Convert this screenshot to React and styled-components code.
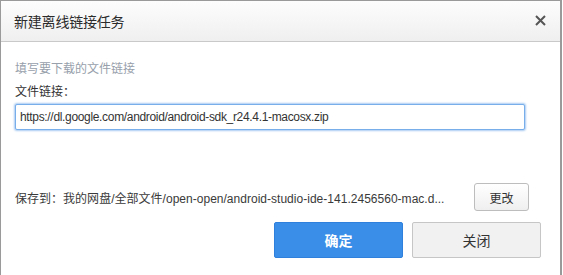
import React, { useState } from "react";
import styled, { createGlobalStyle } from "styled-components";

const GlobalStyle = createGlobalStyle`
  html, body {
    margin: 0;
    padding: 0;
    background: #ffffff;
    overflow: hidden;
  }
  body {
    font-family: "Liberation Sans", "Noto Sans CJK SC", sans-serif;
    color: #333;
  }
`;

const Dialog = styled.div`
  width: 559px;
  height: 274px;
  border-style: solid;
  border-color: #9a9a9a;
  border-width: 1px 2px 0 1px;
  background: #fff;
`;

const Header = styled.div`
  height: 40px;
  display: flex;
  align-items: center;
  justify-content: space-between;
  padding: 0 14px 0 13px;
  background: linear-gradient(#fdfdfd, #efefef);
  border-bottom: 1px solid #c9c9c9;
`;

const Title = styled.h1`
  margin: 0;
  font-size: 14px;
  font-weight: normal;
  color: #2b2b2b;
  letter-spacing: -0.2px;
`;

const CloseButton = styled.button`
  display: flex;
  padding: 0;
  border: 0;
  background: none;
  cursor: pointer;
  margin-top: -1px;
`;

const Body = styled.div`
  padding: 19px 0 0 14px;
`;

const Hint = styled.p`
  margin: 0;
  font-size: 12px;
  line-height: 16px;
  color: #97a0ab;
`;

const Label = styled.label`
  display: block;
  margin-top: 7px;
  font-size: 12px;
  line-height: 16px;
  color: #333;
`;

const LinkInput = styled.input`
  display: block;
  box-sizing: border-box;
  width: 510px;
  height: 26px;
  margin-top: 4px;
  padding: 0 4px;
  border: 1px solid #78aeea;
  border-radius: 2px;
  box-shadow: 0 0 2px 1px #a9cbf2;
  outline: none;
  font-family: inherit;
  font-size: 12px;
  letter-spacing: -0.33px;
  color: #333;
`;

const SaveRow = styled.div`
  display: flex;
  align-items: center;
  justify-content: space-between;
  width: 514px;
  margin-top: 53px;
`;

const SavePath = styled.span`
  font-size: 12px;
  color: #3a3a3a;
  letter-spacing: 0.02px;
`;

const SmallButton = styled.button`
  width: 55px;
  height: 28px;
  padding: 0;
  border: 1px solid #bdbdbd;
  border-radius: 3px;
  background: linear-gradient(#ffffff, #efefef);
  font-family: inherit;
  font-size: 12px;
  color: #333;
  cursor: pointer;
`;

const Footer = styled.div`
  display: flex;
  justify-content: flex-end;
  gap: 9px;
  margin-top: 11px;
  padding-right: 19px;
`;

const ActionButton = styled.button`
  width: 129px;
  height: 36px;
  padding: 0;
  border-radius: 2px;
  border: 1px solid ${({ $primary }) => ($primary ? "#2f80dc" : "#c6c6c6")};
  background: ${({ $primary }) => ($primary ? "#3a8ee8" : "#f1f1f1")};
  color: ${({ $primary }) => ($primary ? "#fff" : "#333")};
  font-family: inherit;
  font-size: 14px;
  font-weight: ${({ $primary }) => ($primary ? "bold" : "normal")};
  cursor: pointer;
`;

function CloseIcon() {
  return (
    <svg width="11" height="11" viewBox="0 0 11 11">
      <path d="M1 1L10 10M10 1L1 10" stroke="#555" strokeWidth="2" />
    </svg>
  );
}

export default function App() {
  const [link, setLink] = useState(
    "https://dl.google.com/android/android-sdk_r24.4.1-macosx.zip"
  );

  return (
    <>
      <GlobalStyle />
      <Dialog>
        <Header>
          <Title>新建离线链接任务</Title>
          <CloseButton aria-label="关闭">
            <CloseIcon />
          </CloseButton>
        </Header>
        <Body>
          <Hint>填写要下载的文件链接</Hint>
          <Label htmlFor="link">文件链接：</Label>
          <LinkInput
            id="link"
            value={link}
            onChange={(e) => setLink(e.target.value)}
          />
          <SaveRow>
            <SavePath>
              保存到：我的网盘/全部文件/open-open/android-studio-ide-141.2456560-mac.d...
            </SavePath>
            <SmallButton>更改</SmallButton>
          </SaveRow>
          <Footer>
            <ActionButton $primary>确定</ActionButton>
            <ActionButton>关闭</ActionButton>
          </Footer>
        </Body>
      </Dialog>
    </>
  );
}
